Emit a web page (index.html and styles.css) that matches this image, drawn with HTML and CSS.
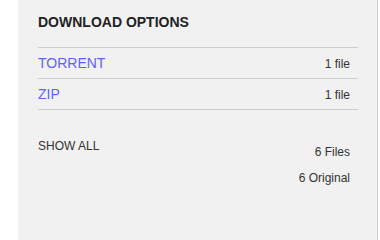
FILE: index.html
```html
<!DOCTYPE html>
<html>
<head>
<meta charset="utf-8">
<link rel="stylesheet" href="styles.css">
</head>
<body>
<section class="panel">
  <h5 class="title">DOWNLOAD OPTIONS</h5>
  <div class="rows">
    <div class="row"><a class="fmt" href="#">TORRENT</a><span class="count">1 file</span></div>
    <div class="row"><a class="fmt" href="#">ZIP</a><span class="count">1 file</span></div>
  </div>
  <div class="footer">
    <a class="show" href="#">SHOW ALL</a>
    <div class="totals">
      <span>6 Files</span>
      <span>6 Original</span>
    </div>
  </div>
</section>
</body>
</html>
```
FILE: styles.css
```css
html, body {
  margin: 0;
  padding: 0;
  background: #ffffff;
  font-family: "Liberation Sans", Arial, sans-serif;
}
.panel {
  margin-left: 18px;
  width: 339px;
  min-height: 100vh;
  padding-left: 20px;
  background: #f1f1f1;
  border-right: 1px solid #cfcfcf;
  box-sizing: content-box;
  overflow: hidden;
}
.title {
  margin: 0;
  padding-top: 14px;
  font-size: 14px;
  line-height: 16px;
  font-weight: bold;
  color: #222;
  margin-bottom: 17px;
}
.rows {
  width: 320px;
  border-bottom: 1px solid #cccccc;
}
.row {
  display: flex;
  justify-content: space-between;
  align-items: baseline;
  border-top: 1px solid #cccccc;
  padding: 7px 8px 7px 0;
  height: 16px;
}
.fmt {
  font-size: 14px;
  line-height: 16px;
  color: #6161fa;
  text-decoration: none;
}
.count {
  font-size: 12px;
  line-height: 14px;
  color: #333;
}
.footer {
  width: 320px;
  display: flex;
  justify-content: space-between;
  align-items: flex-start;
}
.show {
  padding-top: 29px;
  font-size: 12px;
  line-height: 14px;
  color: #333;
  text-decoration: none;
}
.totals {
  padding-top: 35px;
  padding-right: 8px;
  display: flex;
  flex-direction: column;
  align-items: flex-end;
  gap: 12px;
  font-size: 12px;
  line-height: 14px;
  color: #333;
}
```
